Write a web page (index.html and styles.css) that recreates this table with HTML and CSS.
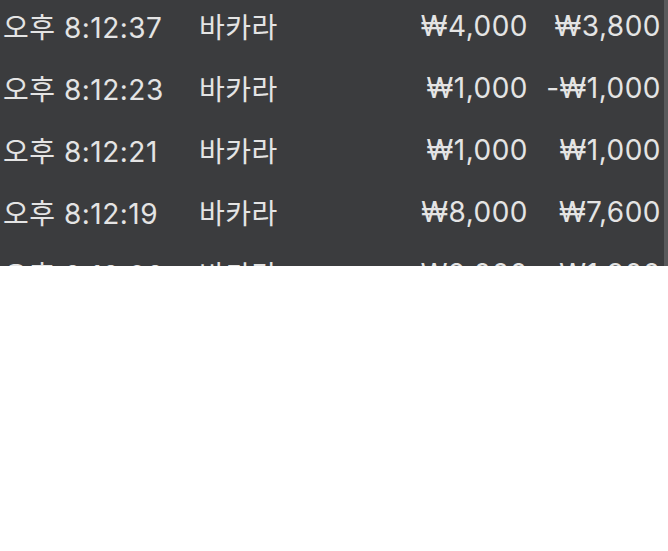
FILE: index.html
```html
<!DOCTYPE html>
<html>
    <head>
        <meta charset="utf-8">
        <link rel="stylesheet" href="styles.css">
    </head>
    <body>
        <div class="panel">
            <div class="list">
                <div class="row">
                    <span class="time">오후 8:12:37</span>
                    <span class="game">바카라</span>
                    <span class="bet">₩4,000</span>
                    <span class="win">₩3,800</span>
                </div>
                <div class="row">
                    <span class="time">오후 8:12:23</span>
                    <span class="game">바카라</span>
                    <span class="bet">₩1,000</span>
                    <span class="win">-₩1,000</span>
                </div>
                <div class="row">
                    <span class="time">오후 8:12:21</span>
                    <span class="game">바카라</span>
                    <span class="bet">₩1,000</span>
                    <span class="win">₩1,000</span>
                </div>
                <div class="row">
                    <span class="time">오후 8:12:19</span>
                    <span class="game">바카라</span>
                    <span class="bet">₩8,000</span>
                    <span class="win">₩7,600</span>
                </div>
                <div class="row">
                    <span class="time">오후 8:12:08</span>
                    <span class="game">바카라</span>
                    <span class="bet">₩2,000</span>
                    <span class="win">₩1,900</span>
                </div>
            </div>
            <div class="edge"></div>
        </div>
    </body>
</html>
```

FILE: styles.css
```css
body{
    margin:0;
    background-color: white;
    font-family: Inter, "Noto Sans CJK KR", sans-serif;
}
.panel{
    display:flex;
    height:266px;
    overflow:hidden;
    background-color: #3b3c3e;
}
.list{
    flex:1;
    margin-top:-5px;
}
.row{
    display:grid;
    grid-template-columns: 196px 1fr 140px 133px;
    align-items:center;
    height:62px;
    padding:0 3px;
    color:#e4e4e4;
    font-size:28px;
    letter-spacing:0.5px;
    white-space:nowrap;
}
.bet, .win{
    text-align:right;
}
.edge{
    width:4px;
    background-color: #58595b;
}
```
